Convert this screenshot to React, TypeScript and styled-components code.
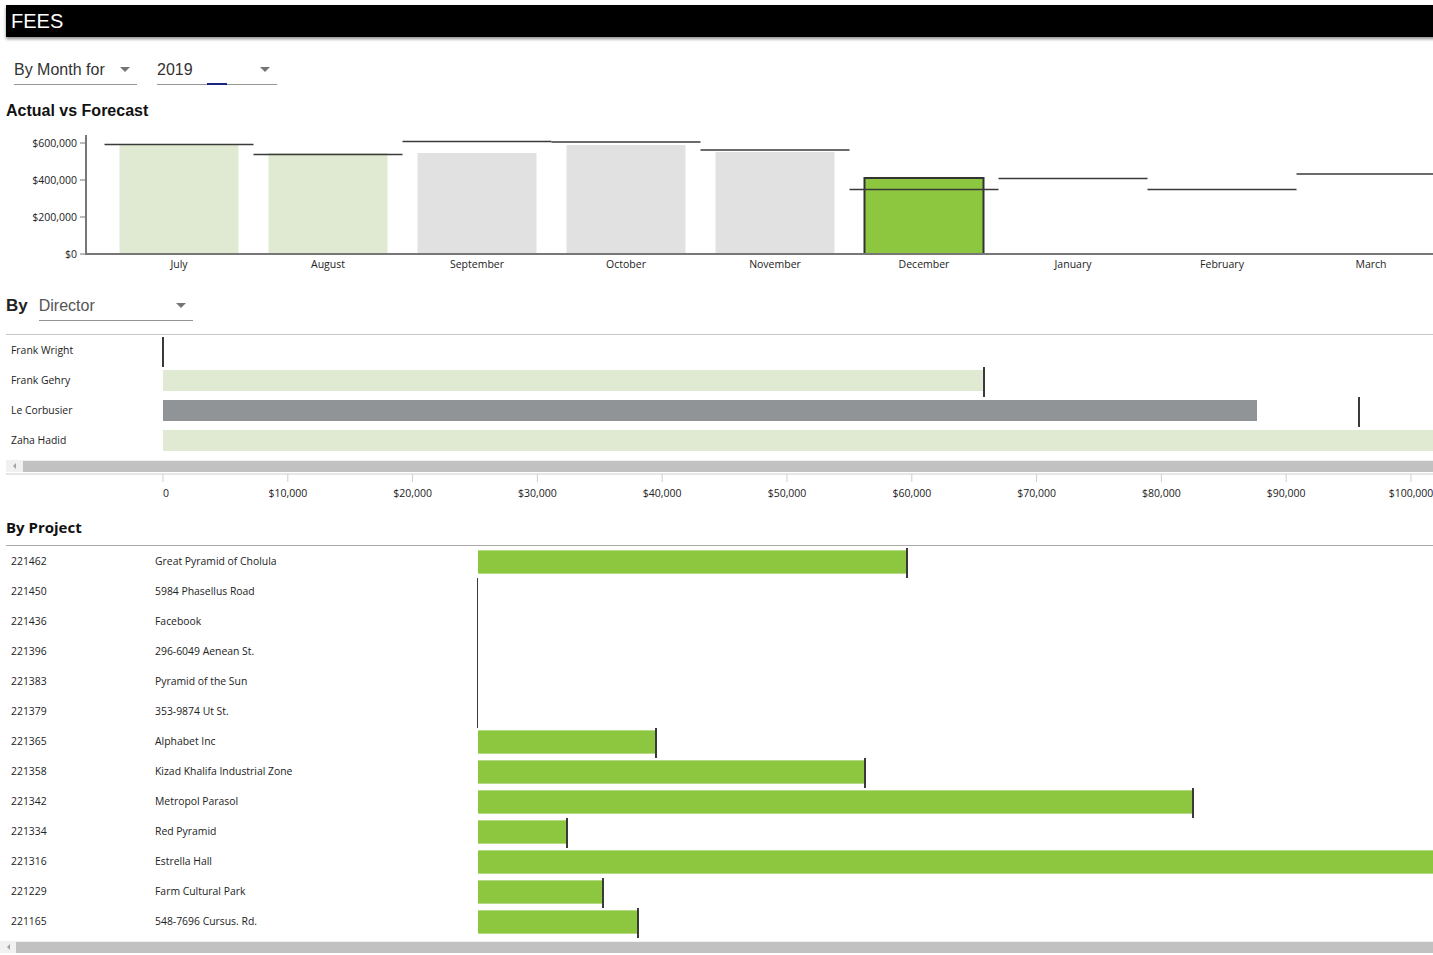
import React from 'react';
import styled, { createGlobalStyle } from 'styled-components';

const GlobalStyle = createGlobalStyle`
  body {
    margin: 0;
    background: #fff;
    font-family: "Liberation Sans", Arial, sans-serif;
    overflow: hidden;
  }
`;

const small = `"Open Sans", "Noto Sans", sans-serif`;

const Page = styled.div`
  width: 1433px;
  box-sizing: border-box;
  padding: 5px 0 0 6px;
  overflow: hidden;
`;

const Header = styled.div`
  width: 1440px;
  height: 32px;
  background: #000;
  color: #fff;
  font-size: 20px;
  padding-left: 5px;
  display: flex;
  align-items: center;
  box-shadow: 0 2px 3px rgba(0, 0, 0, 0.45);
`;

const Controls = styled.div`
  display: flex;
  gap: 20px;
  margin-top: 18px;
  padding-left: 8px;
`;

const SelectBox = styled.div<{ $width: number; $muted?: boolean }>`
  position: relative;
  width: ${(p) => p.$width}px;
  height: 30px;
  box-sizing: border-box;
  border-bottom: 1px solid #949494;
  display: flex;
  align-items: center;
  justify-content: space-between;
  padding-right: 7px;
  font-size: 16px;
  color: ${(p) => (p.$muted ? '#555' : '#333')};
`;

const Caret = styled.span`
  width: 0;
  height: 0;
  border-left: 5px solid transparent;
  border-right: 5px solid transparent;
  border-top: 5px solid #757575;
`;

const FocusMark = styled.span<{ $left: number }>`
  position: absolute;
  left: ${(p) => p.$left}px;
  bottom: -1px;
  width: 20px;
  height: 2px;
  background: #1a237e;
`;

const Title = styled.div`
  margin-top: 16px;
  font-size: 16px;
  font-weight: bold;
  line-height: 20px;
  color: #111;
`;

const ChartSvg = styled.svg`
  display: block;
  width: 1427px;
  height: 160px;
  font-family: ${small};
  font-size: 10.5px;
`;

const DirectorHead = styled.div`
  display: flex;
  align-items: center;
  gap: 11px;
  margin-top: 10px;
`;

const ByLabel = styled.span`
  font-size: 17px;
  font-weight: bold;
  color: #222;
`;

const Divider = styled.div<{ $gap: number; $color: string }>`
  margin-top: ${(p) => p.$gap}px;
  border-top: 1px solid ${(p) => p.$color};
`;

const Row = styled.div<{ $cols: string }>`
  display: grid;
  grid-template-columns: ${(p) => p.$cols};
  height: 30px;
  font-family: ${small};
  font-size: 10.4px;
  color: #222;
`;

const Cell = styled.div`
  display: flex;
  align-items: center;
  padding-left: 5px;
  white-space: nowrap;
`;

const Track = styled.div`
  position: relative;
`;

const Bar = styled.div<{ $kind: 'past' | 'grey' | 'green'; $top: number; $height: number }>`
  margin-top: ${(p) => p.$top}px;
  height: ${(p) => p.$height}px;
  box-sizing: border-box;
  background: ${(p) => (p.$kind === 'past' ? '#e0e9d1' : p.$kind === 'grey' ? '#909497' : '#8dc63f')};
  border-top: ${(p) => (p.$kind === 'green' ? '1px solid #b6da85' : 'none')};
  border-bottom: ${(p) => (p.$kind === 'green' ? '1px solid #b6da85' : 'none')};
`;

const Marker = styled.div<{ $top: number }>`
  position: absolute;
  top: ${(p) => p.$top}px;
  width: 2px;
  height: 30px;
  margin-left: -1px;
  background: #3a3a3a;
  z-index: 1;
`;

const Scrollbar = styled.div<{ $gap: number; $bleed?: boolean }>`
  display: flex;
  align-items: center;
  margin-top: ${(p) => p.$gap}px;
  margin-left: ${(p) => (p.$bleed ? -6 : 0)}px;
  height: 12px;
  background: #f1f1f1;
`;

const ScrollArrow = styled.div<{ $w: number }>`
  width: ${(p) => p.$w}px;
  display: flex;
  justify-content: center;
  &::before {
    content: '';
    border-top: 3px solid transparent;
    border-bottom: 3px solid transparent;
    border-right: 3px solid #a3a3a3;
  }
`;

const ScrollThumb = styled.div`
  flex: 1;
  height: 11px;
  background: #c1c1c1;
`;

const AxisSvg = styled.svg`
  display: block;
  width: 1427px;
  height: 29px;
  font-family: ${small};
  font-size: 10.5px;
`;

const ProjectTitle = styled.div`
  margin-top: 16px;
  font-family: ${small};
  font-size: 15px;
  font-weight: bold;
  line-height: 20px;
  color: #111;
`;

// chart geometry (svg x = page x - 6)
const AXIS_Y = 133;
const PX_PER_200K = 37;
const yOf = (v: number) => AXIS_Y - (v / 200000) * PX_PER_200K;

type Month = { name: string; actual?: number; forecast: number; kind?: 'past' | 'open' | 'now' };
const v = (y: number) => ((253 - y) / 37) * 200000;

const months: Month[] = [
  { name: 'July', actual: v(144), forecast: v(143.5), kind: 'past' },
  { name: 'August', actual: v(152), forecast: v(153.5), kind: 'past' },
  { name: 'September', actual: v(152), forecast: v(140.5), kind: 'open' },
  { name: 'October', actual: v(144), forecast: v(141), kind: 'open' },
  { name: 'November', actual: v(151), forecast: v(149), kind: 'open' },
  { name: 'December', actual: v(177), forecast: v(188.5), kind: 'now' },
  { name: 'January', forecast: v(177.5) },
  { name: 'February', forecast: v(188.5) },
  { name: 'March', forecast: v(173) },
];

const BAND0 = 98.5;
const BAND = 149;

function FeesChart() {
  return (
    <ChartSvg viewBox="0 0 1427 160">
      {months.map((m, i) => {
        const x = BAND0 + BAND * i;
        const top = m.actual !== undefined ? yOf(m.actual) : AXIS_Y;
        const fill = m.kind === 'past' ? '#e0e9d1' : m.kind === 'now' ? '#8dc63f' : '#e0e1e0';
        return (
          <g key={m.name}>
            {m.actual !== undefined && (
              <rect
                x={x + 15}
                y={top}
                width={119}
                height={AXIS_Y - top}
                fill={fill}
                stroke={m.kind === 'now' ? '#333' : 'none'}
                strokeWidth={2}
              />
            )}
            <line x1={x} x2={x + BAND} y1={yOf(m.forecast)} y2={yOf(m.forecast)} stroke="#3a3a3a" strokeWidth={1.6} />
            <text x={x + BAND / 2} y={147} textAnchor="middle" fill="#222">
              {m.name}
            </text>
          </g>
        );
      })}
      <line x1={80} x2={80} y1={14} y2={AXIS_Y + 1} stroke="#777" strokeWidth={2} />
      <line x1={80} x2={1427} y1={AXIS_Y} y2={AXIS_Y} stroke="#777" strokeWidth={2} />
      {[0, 200000, 400000, 600000].map((t) => (
        <g key={t}>
          <line x1={74} x2={80} y1={yOf(t)} y2={yOf(t)} stroke="#777" strokeWidth={1} />
          <text x={71} y={yOf(t) + 3.5} textAnchor="end" fill="#222">
            {t === 0 ? '$0' : `$${t.toLocaleString('en-US')}`}
          </text>
        </g>
      ))}
    </ChartSvg>
  );
}

// director scale: 0 at page x 163, 10k = 124.8px
const DIR_PX = 124.8 / 10000;

const directors = [
  { name: 'Frank Wright', actual: 0, target: 0, kind: 'past' as const },
  { name: 'Frank Gehry', actual: 65800, target: 65800, kind: 'past' as const },
  { name: 'Le Corbusier', actual: 87650, target: 95800, kind: 'grey' as const },
  { name: 'Zaha Hadid', actual: 112000, target: 118000, kind: 'past' as const },
];

function DirectorAxis() {
  const ticks = Array.from({ length: 11 }, (_, i) => i * 10000);
  return (
    <AxisSvg viewBox="0 0 1427 29">
      <line x1={0} x2={1427} y1={2} y2={2} stroke="#cfcfcf" strokeWidth={1} />
      {ticks.map((t) => {
        const x = 157 + t * DIR_PX;
        return (
          <g key={t}>
            <line x1={x} x2={x} y1={2} y2={10} stroke="#cfcfcf" strokeWidth={1} />
            <text x={t === 0 ? x + 3 : x} y={25} textAnchor="middle" fill="#222">
              {t === 0 ? '0' : `$${t.toLocaleString('en-US')}`}
            </text>
          </g>
        );
      })}
    </AxisSvg>
  );
}

const projects = [
  { id: '221462', name: 'Great Pyramid of Cholula', px: 429 },
  { id: '221450', name: '5984 Phasellus Road', px: 0 },
  { id: '221436', name: 'Facebook', px: 0 },
  { id: '221396', name: '296-6049 Aenean St.', px: 0 },
  { id: '221383', name: 'Pyramid of the Sun', px: 0 },
  { id: '221379', name: '353-9874 Ut St.', px: 0 },
  { id: '221365', name: 'Alphabet Inc', px: 178 },
  { id: '221358', name: 'Kizad Khalifa Industrial Zone', px: 387 },
  { id: '221342', name: 'Metropol Parasol', px: 715 },
  { id: '221334', name: 'Red Pyramid', px: 89 },
  { id: '221316', name: 'Estrella Hall', px: 1100 },
  { id: '221229', name: 'Farm Cultural Park', px: 125 },
  { id: '221165', name: '548-7696 Cursus. Rd.', px: 160 },
];

export default function App() {
  return (
    <>
      <GlobalStyle />
      <Page>
        <Header>FEES</Header>

        <Controls>
          <SelectBox $width={123}>
            <span>By Month for</span>
            <Caret />
          </SelectBox>
          <SelectBox $width={120}>
            <span>2019</span>
            <Caret />
            <FocusMark $left={50} />
          </SelectBox>
        </Controls>

        <Title>Actual vs Forecast</Title>
        <FeesChart />

        <DirectorHead>
          <ByLabel>By</ByLabel>
          <SelectBox $width={154} $muted>
            <span>Director</span>
            <Caret />
          </SelectBox>
        </DirectorHead>
        <Divider $gap={13} $color="#c8c8c8" />

        {directors.map((d) => (
          <Row key={d.name} $cols="157px 1fr">
            <Cell>{d.name}</Cell>
            <Track>
              {d.actual > 0 && <Bar $kind={d.kind} $top={5} $height={21} style={{ width: d.actual * DIR_PX }} />}
              <Marker $top={2} style={{ left: d.target * DIR_PX }} />
            </Track>
          </Row>
        ))}
        <Scrollbar $gap={5}>
          <ScrollArrow $w={17} />
          <ScrollThumb />
        </Scrollbar>
        <DirectorAxis />

        <ProjectTitle>By Project</ProjectTitle>
        <Divider $gap={8} $color="#aaa" />

        {projects.map((p) => (
          <Row key={p.id} $cols="144px 328px 1fr">
            <Cell>{p.id}</Cell>
            <Cell>{p.name}</Cell>
            <Track>
              {p.px > 0 && <Bar $kind="green" $top={4} $height={24} style={{ width: p.px }} />}
              <Marker $top={2} style={{ left: p.px, width: p.px === 0 ? 1 : 2 }} />
            </Track>
          </Row>
        ))}
        <Scrollbar $gap={5} $bleed>
          <ScrollArrow $w={16} />
          <ScrollThumb />
        </Scrollbar>
      </Page>
    </>
  );
}
